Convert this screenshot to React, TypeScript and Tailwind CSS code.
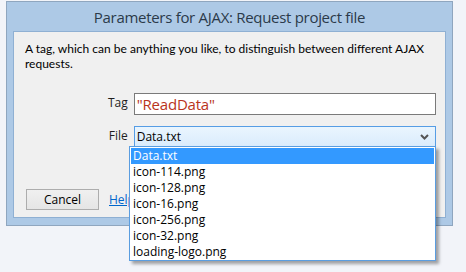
export default function App() {
  const files = ["Data.txt", "icon-114.png", "icon-128.png", "icon-16.png", "icon-256.png", "icon-32.png", "loading-logo.png"];

  return (
    <div className="w-[466px] h-[272px] bg-[#f2f4f9] overflow-hidden relative" style={{ fontFamily: '"Open Sans", Arial, sans-serif' }}>
      <div className="ml-[6px] mt-[1px] w-[447px] h-[225px] border border-[#8fa6bf] bg-[#adc9e6] flex flex-col px-[6px] pb-[7px]">
        <div className="h-[29px] flex items-center justify-center text-[15px] tracking-[-0.3px] text-[#2b3a4a] pt-[1px]">
          Parameters for AJAX: Request project file
        </div>
        <div className="flex-1 bg-[#f0f0f0] border border-[#8fb0d3] pl-[11px] pr-[9px] pt-[9px] relative">
          <p className="text-[12px] leading-[15px] whitespace-nowrap text-black" style={{ fontFamily: "Lato, Arial, sans-serif" }}>
            A tag, which can be anything you like, to distinguish between different AJAX
            <br />
            requests.
          </p>
          <div className="mt-[22px] flex items-start">
            <span className="w-[104px] text-right text-[12px] text-[#1e1e1e] pt-[1px]">Tag</span>
            <div className="ml-[6px] w-[306px] h-[22px] border border-[#7a7a7a] bg-white flex items-center px-[2px]">
              <span className="text-[15px] leading-none tracking-[-0.2px] text-[#b9341c]">"ReadData"</span>
            </div>
          </div>
          <div className="mt-[11px] flex items-start">
            <span className="w-[104px] text-right text-[12px] text-[#1e1e1e] pt-[1px]">File</span>
            <div className="ml-[6px] w-[306px] h-[22px] border border-[#569de5] bg-gradient-to-b from-[#eaf5fe] to-[#d9ebfc] flex items-center justify-between pl-[2px] pr-[6px]">
              <span className="text-[12px] text-black">Data.txt</span>
              <svg width="9" height="6" viewBox="0 0 9 6">
                <path d="M1 1 L4.5 4.5 L8 1" stroke="#555" strokeWidth="2" fill="none" />
              </svg>
            </div>
          </div>
          <div className="mt-[41px] pl-[1px] flex items-center">
            <button className="w-[73px] h-[21px] border border-[#adadad] bg-gradient-to-b from-[#f0f0f0] to-[#e5e5e5] text-[12px] text-black">
              Cancel
            </button>
            <a className="ml-[10px] text-[12px] text-[#0066cc] underline">Help</a>
          </div>
        </div>
      </div>
      <div className="absolute left-[129px] top-[146px] w-[307px] h-[115px] border border-[#5a9de0] bg-white shadow-[3px_3px_3px_rgba(0,0,0,0.35)] pt-[1px] px-[1px]">
        {files.map((f, i) => (
          <div
            key={f}
            className={`h-[16px] pl-[2px] text-[12px] leading-[16px] ${i === 0 ? "bg-[#3399ff] text-white" : "text-black"}`}
          >
            {f}
          </div>
        ))}
      </div>
    </div>
  );
}
